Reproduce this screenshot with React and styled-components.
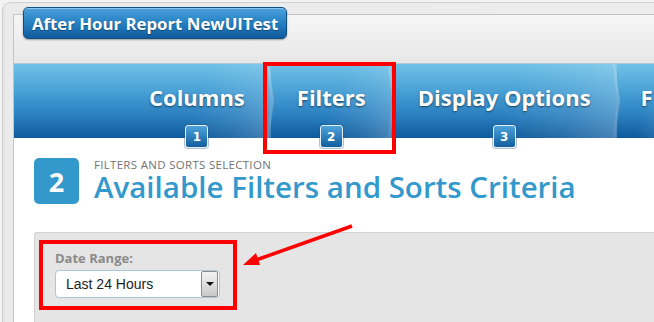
import React from "react";
import styled, { createGlobalStyle } from "styled-components";

const GlobalStyle = createGlobalStyle`
  html, body {
    margin: 0;
    padding: 0;
    background: #f3f3f3;
    overflow: hidden;
  }
  #root {
    width: 654px;
    height: 322px;
    position: relative;
    overflow: hidden;
  }
`;

const Frame = styled.div`
  margin: 2px 0 0 2px;
  height: 330px;
  border: 1px solid #cfcfcf;
  border-right: none;
  border-radius: 9px 0 0 0;
  background: linear-gradient(90deg, #e2e2e2 0, #ebebeb 3px, #ececec 100%);
  padding: 11px 0 0 10px;
  box-sizing: border-box;
`;

const Panel = styled.div`
  height: 100%;
  border-top: 1px solid #c4c4c4;
  border-left: 1px solid #c4c4c4;
  background: #fff;
  display: flex;
  flex-direction: column;
`;

const Header = styled.div`
  height: 48px;
  padding-left: 9px;
  background: linear-gradient(#f6f6f6, #e7e7e7);
  border-bottom: 1px solid #b9c7d2;
`;

const TitleButton = styled.div`
  display: inline-flex;
  align-items: center;
  margin-top: -8px;
  height: 30px;
  padding: 0 8px;
  border: 1px solid #0e4f86;
  border-radius: 5px;
  background: linear-gradient(#4ca1db 0%, #2580c2 50%, #115b9c 100%);
  box-shadow: 0 1px 2px rgba(0, 0, 0, 0.35), inset 0 1px 0 rgba(255, 255, 255, 0.35);
  color: #fff;
  font-family: "Open Sans", sans-serif;
  font-weight: 700;
  font-size: 16.8px;
  text-shadow: 0 1px 1px rgba(0, 0, 0, 0.35);
`;

const TabBar = styled.div`
  display: flex;
  height: 74px;
  padding-left: 109px;
  background: linear-gradient(#6fc1e7 0%, #4aa2d6 35%, #2a7fbf 70%, #0e5a9c 100%);
`;

const Tab = styled.div`
  position: relative;
  display: flex;
  flex-direction: column;
  align-items: center;
  padding: 0 ${(p) => p.$pad || 26}px;
  background: linear-gradient(
    110deg,
    rgba(255, 255, 255, 0) 50%,
    rgba(255, 255, 255, 0.1) 78%,
    rgba(255, 255, 255, 0.24) 100%
  );
`;

const TabLabel = styled.div`
  margin-top: 18px;
  line-height: 30px;
  color: #fff;
  font-family: "Open Sans", sans-serif;
  font-weight: 700;
  font-size: 22px;
  white-space: nowrap;
  text-shadow: 0 1px 2px rgba(0, 0, 0, 0.55);
`;

const Badge = styled.div`
  margin-top: auto;
  margin-bottom: -10px;
  width: 21px;
  height: 21px;
  border: 1px solid #e4f0f8;
  border-radius: 3px;
  background: linear-gradient(#4da3dc, #125d9e);
  box-shadow: 0 0 0 1px rgba(40, 80, 120, 0.35);
  color: #fff;
  font-family: "DejaVu Sans", sans-serif;
  font-weight: 700;
  font-size: 12px;
  display: flex;
  align-items: center;
  justify-content: center;
  z-index: 1;
`;

const Chevron = styled.svg`
  flex: none;
  width: 7px;
  height: 74px;
  margin: 0 -3px 0 -4px;
  z-index: 1;
`;

const Content = styled.div`
  padding: 20px 0 0 20px;
  flex: 1;
  display: flex;
  flex-direction: column;
`;

const HeadingRow = styled.div`
  display: flex;
  align-items: flex-start;
`;

const StepBox = styled.div`
  width: 45px;
  height: 46px;
  border-radius: 5px;
  background: #3399cc;
  color: #fff;
  font-family: "Open Sans", sans-serif;
  font-weight: 700;
  font-size: 27px;
  display: flex;
  align-items: center;
  justify-content: center;
`;

const HeadingText = styled.div`
  margin-left: 15px;
`;

const Eyebrow = styled.div`
  font-family: "Open Sans", sans-serif;
  font-size: 11.5px;
  letter-spacing: 0.3px;
  color: #737373;
  line-height: 13px;
`;

const Heading = styled.h1`
  margin: 0;
  font-family: "Open Sans", sans-serif;
  font-weight: 600;
  font-size: 29.5px;
  line-height: 32px;
  color: #3399cc;
  white-space: nowrap;
`;

const FilterPanel = styled.div`
  margin-top: 28px;
  flex: 1;
  background: #e5e5e5;
  border-top: 1px solid #d2d2d2;
  border-left: 1px solid #d2d2d2;
  border-radius: 3px 0 0 0;
  padding: 16px 0 0 20px;
`;

const FieldLabel = styled.div`
  font-family: "Open Sans", sans-serif;
  font-weight: 700;
  font-size: 13px;
  color: #8a8a8a;
  line-height: 18px;
`;

const Select = styled.div`
  margin-top: 3px;
  width: 163px;
  height: 26px;
  border: 1px solid #a9c6da;
  border-radius: 4px;
  background: #fff;
  display: flex;
  align-items: center;
  justify-content: space-between;
  box-sizing: content-box;
`;

const SelectValue = styled.span`
  padding-left: 10px;
  font-family: "Liberation Sans", Arial, sans-serif;
  font-size: 14px;
  color: #1e1e1e;
`;

const DropButton = styled.div`
  width: 15px;
  height: 24px;
  margin-right: 1px;
  border: 1px solid #8d8d8d;
  border-radius: 2px;
  background: linear-gradient(#f4f4f4, #c9c9c9);
  display: flex;
  align-items: center;
  justify-content: center;
  &::after {
    content: "";
    border-left: 4px solid transparent;
    border-right: 4px solid transparent;
    border-top: 4px solid #111;
  }
`;

const Callout = styled.div`
  position: absolute;
  left: ${(p) => p.$x}px;
  top: ${(p) => p.$y}px;
  width: ${(p) => p.$w}px;
  height: ${(p) => p.$h}px;
  border: 4px solid #ff0000;
  box-sizing: border-box;
  pointer-events: none;
  z-index: 5;
`;

const ArrowOverlay = styled.svg`
  position: absolute;
  left: 0;
  top: 0;
  width: 654px;
  height: 322px;
  pointer-events: none;
  z-index: 5;
`;

const tabs = [
  { label: "Columns", num: 1 },
  { label: "Filters", num: 2 },
  { label: "Display Options", num: 3 },
  { label: "F", num: null },
];

function Sep() {
  return (
    <Chevron viewBox="0 0 7 74" preserveAspectRatio="none">
      <defs>
        <linearGradient id="sepg" x1="0" y1="0" x2="0" y2="1">
          <stop offset="0" stopColor="#a6daf2" stopOpacity="0.75" />
          <stop offset="1" stopColor="#5d93c2" stopOpacity="0.6" />
        </linearGradient>
      </defs>
      <polygon points="0,0 2,0 7,37 2,74 0,74 4,37" fill="url(#sepg)" />
    </Chevron>
  );
}

export default function App() {
  return (
    <>
      <GlobalStyle />
      <Frame>
        <Panel>
          <Header>
            <TitleButton>After Hour Report NewUITest</TitleButton>
          </Header>
          <TabBar>
            {tabs.map((t, i) => (
              <React.Fragment key={t.label}>
                {i > 0 && <Sep />}
                <Tab $pad={i === 3 ? 24 : 26}>
                  <TabLabel>{t.label}</TabLabel>
                  {t.num && <Badge>{t.num}</Badge>}
                </Tab>
              </React.Fragment>
            ))}
          </TabBar>
          <Content>
            <HeadingRow>
              <StepBox>2</StepBox>
              <HeadingText>
                <Eyebrow>FILTERS AND SORTS SELECTION</Eyebrow>
                <Heading>Available Filters and Sorts Criteria</Heading>
              </HeadingText>
            </HeadingRow>
            <FilterPanel>
              <FieldLabel>Date Range:</FieldLabel>
              <Select>
                <SelectValue>Last 24 Hours</SelectValue>
                <DropButton />
              </Select>
            </FilterPanel>
          </Content>
        </Panel>
      </Frame>
      <Callout $x={263} $y={62} $w={133} $h={92} />
      <Callout $x={39} $y={240} $w={198} $h={70} />
      <ArrowOverlay viewBox="0 0 654 322">
        <line x1="352" y1="226" x2="256" y2="260" stroke="#ff0000" strokeWidth="3.5" />
        <polygon points="243,265 260,265 256,253" fill="#ff0000" />
      </ArrowOverlay>
    </>
  );
}
